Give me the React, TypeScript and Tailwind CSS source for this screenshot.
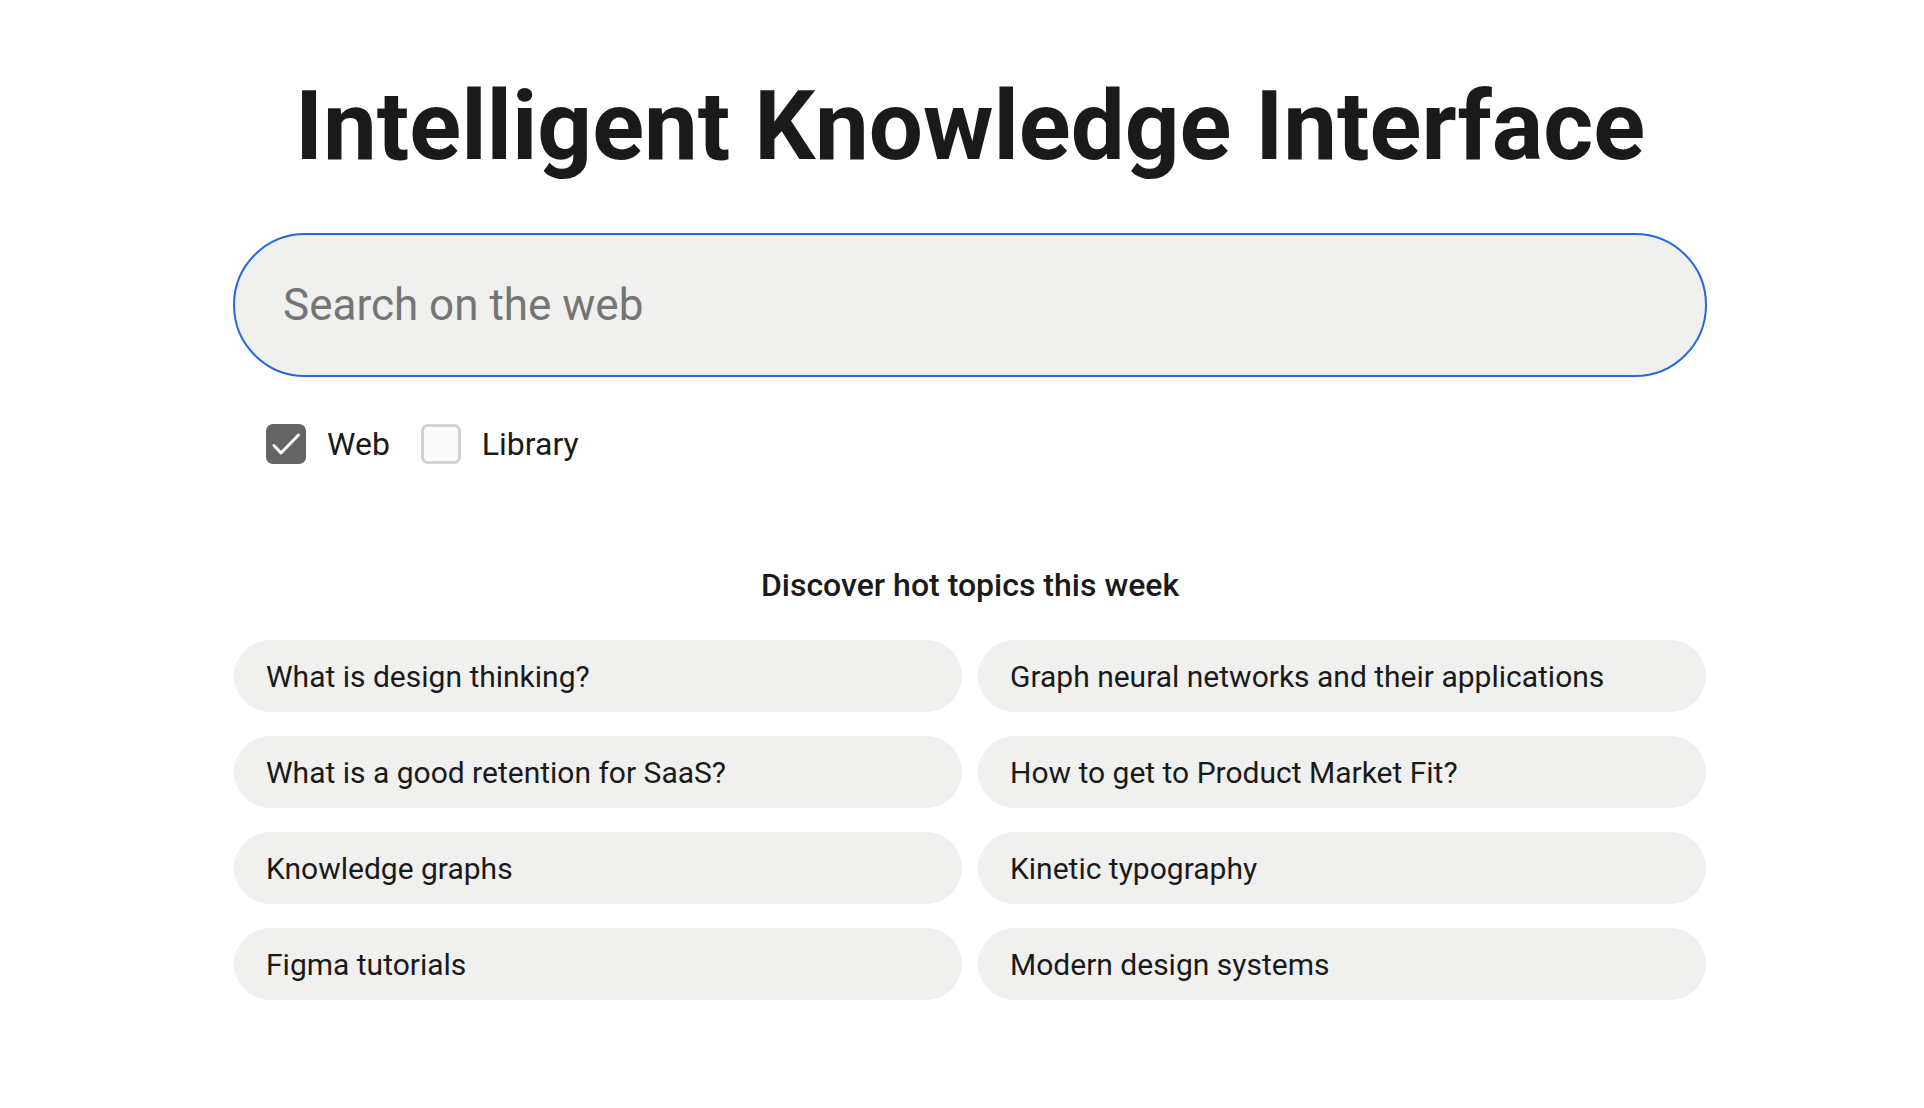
import { useState } from "react";

const topics = [
  "What is design thinking?",
  "Graph neural networks and their applications",
  "What is a good retention for SaaS?",
  "How to get to Product Market Fit?",
  "Knowledge graphs",
  "Kinetic typography",
  "Figma tutorials",
  "Modern design systems",
];

function Checkbox({
  label,
  checked,
  onToggle,
}: {
  label: string;
  checked: boolean;
  onToggle: () => void;
}) {
  return (
    <button onClick={onToggle} className="flex items-center gap-[21px]">
      {checked ? (
        <span className="flex h-[40px] w-[40px] items-center justify-center rounded-[7px] bg-[#646464]">
          <svg width="40" height="40" viewBox="0 0 40 40" fill="none">
            <path
              d="M8 21.5L15 29L32.5 11"
              stroke="white"
              strokeWidth="3"
              strokeLinecap="round"
              strokeLinejoin="round"
            />
          </svg>
        </span>
      ) : (
        <span className="h-[40px] w-[40px] rounded-[7px] border-[3px] border-[#d2d2d2] bg-[#fafafa]" />
      )}
      <span className="text-[32px] leading-[40px] text-[#1a1a1a]">{label}</span>
    </button>
  );
}

export default function App() {
  const [web, setWeb] = useState(true);
  const [library, setLibrary] = useState(false);
  const [query, setQuery] = useState("");

  return (
    <div
      className="flex min-h-screen justify-center bg-white pl-[16px]"
      style={{ fontFamily: "Roboto, 'Noto Sans', sans-serif" }}
    >
      <div className="flex w-[1474px] flex-col pt-[78px]">
        <h1 className="text-center text-[96px] font-bold leading-[96px] text-[#1a1a1a]">
          Intelligent Knowledge Interface
        </h1>

        {/* search */}
        <div className="mt-[59px] flex h-[144px] items-center rounded-full border-2 border-[#2368e0] bg-[#f0f0ef] px-[48px]">
          <input
            value={query}
            onChange={(e) => setQuery(e.target.value)}
            placeholder="Search on the web"
            className="w-full bg-transparent text-[44px] text-[#1a1a1a] outline-none placeholder:text-[#757575]"
          />
        </div>

        <div className="mt-[47px] flex items-center gap-[31px] pl-[33px]">
          <Checkbox label="Web" checked={web} onToggle={() => setWeb(!web)} />
          <Checkbox
            label="Library"
            checked={library}
            onToggle={() => setLibrary(!library)}
          />
        </div>

        <h2 className="mt-[103px] text-center text-[32px] font-medium leading-[36px] text-[#1a1a1a]">
          Discover hot topics this week
        </h2>

        <div className="mt-[37px] grid grid-cols-2 gap-x-[16px] gap-y-[24px] px-[1px]">
          {topics.map((t) => (
            <button
              key={t}
              className="flex h-[72px] items-center rounded-full bg-[#f0f0ef] px-[32px] text-left text-[30px] text-[#1a1a1a]"
            >
              {t}
            </button>
          ))}
        </div>
      </div>
    </div>
  );
}
